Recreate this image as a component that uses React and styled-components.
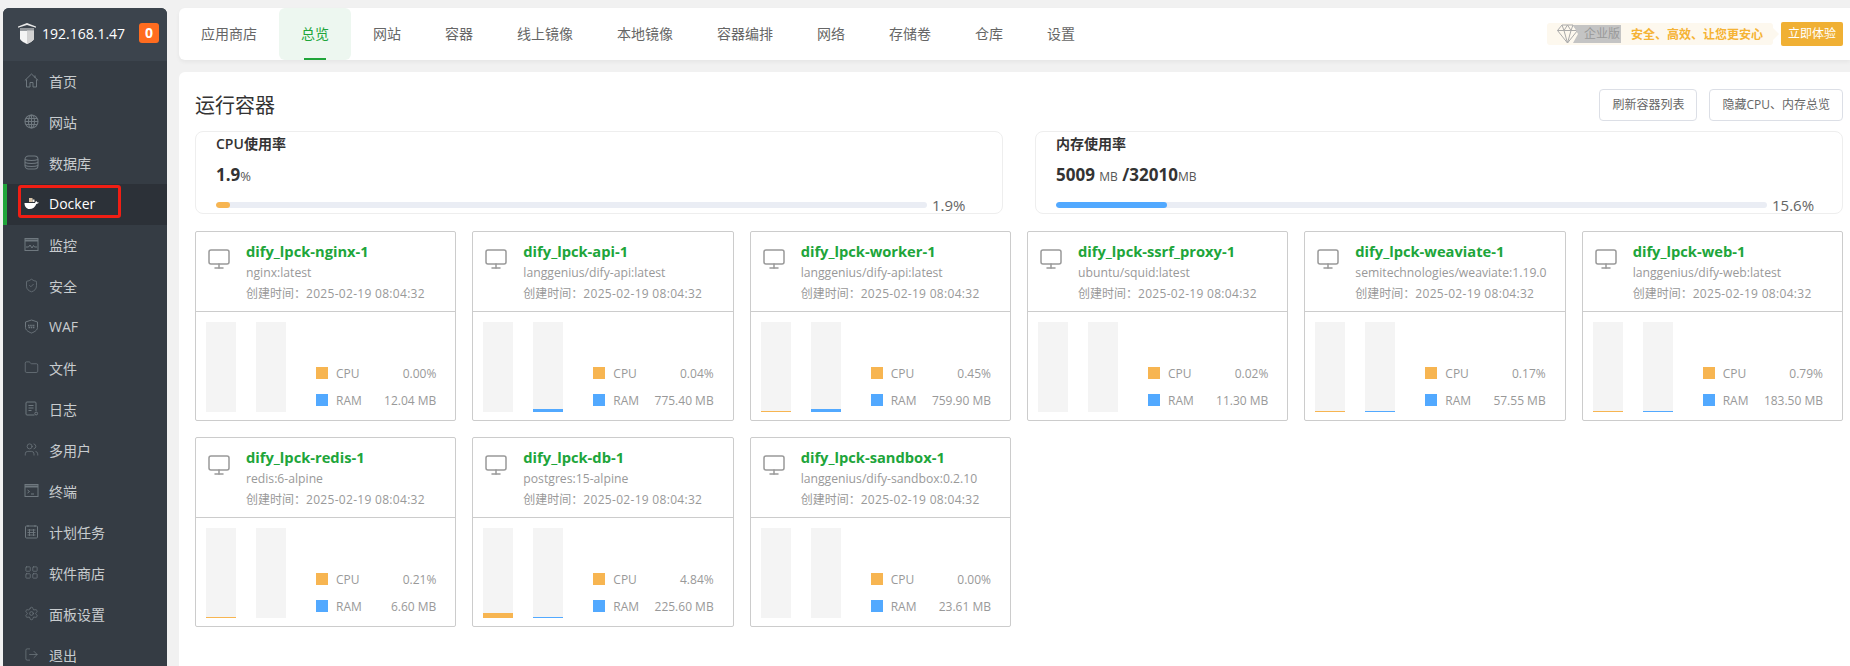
import styled, { createGlobalStyle } from "styled-components";
import { ShieldCheck, Folder, Users, LayoutGrid, Settings, LogOut, Monitor } from "lucide-react";

const GlobalStyle = createGlobalStyle`
  html, body {
    margin: 0;
    height: 666px;
    overflow: hidden;
    background: #f1f1f1;
    font-family: "Open Sans", "Noto Sans CJK SC", sans-serif;
  }
  * { box-sizing: border-box; }
`;

const Page = styled.div`
  display: flex;
  height: 666px;
  padding: 8px 0 0 3px;
  gap: 12px;
`;

const Sidebar = styled.aside`
  width: 164px;
  flex: none;
  background: #353c44;
  border-radius: 6px 6px 0 0;
  overflow: hidden;
`;

const SideHead = styled.div`
  height: 53px;
  background: #3c444d;
  display: flex;
  align-items: center;
  padding: 0 8px 3px 14px;
  color: #fff;
  font-size: 14px;
`;

const HostName = styled.span`
  margin-left: 5px;
  flex: 1;
  white-space: nowrap;
`;

const Badge = styled.span`
  width: 20px;
  height: 20px;
  background: #ff6c1f;
  border-radius: 3px;
  font-weight: 700;
  font-size: 14px;
  line-height: 20px;
  text-align: center;
`;

const SideItem = styled.div`
  position: relative;
  height: 41px;
  display: flex;
  align-items: center;
  gap: 10px;
  padding-bottom: 2px;
  font-size: 14px;
  color: ${(p) => (p.$active ? "#fff" : "#c8cccf")};
  background: ${(p) => (p.$active ? "#2c3138" : "transparent")};
  border-left: ${(p) => (p.$active ? "4px solid #20a53a" : "none")};
  padding-left: ${(p) => (p.$active ? "17px" : "21px")};
  svg {
    flex: none;
    color: ${(p) => (p.$active ? "#fff" : "#6f787f")};
  }
`;

const RedBox = styled.span`
  position: absolute;
  left: 11px;
  top: 1px;
  width: 103px;
  height: 33px;
  border: 3px solid #f01e14;
  border-radius: 3px;
`;

const Main = styled.main`
  flex: 1;
  min-width: 0;
  display: flex;
  flex-direction: column;
  gap: 12px;
`;

const TopBar = styled.nav`
  height: 52px;
  flex: none;
  background: #fff;
  border-radius: 6px 0 0 6px;
  box-shadow: 0 2px 4px rgba(0, 0, 0, 0.05);
  display: flex;
  align-items: stretch;
  padding-right: 7px;
`;

const Tab = styled.div`
  position: relative;
  padding: 0 22px;
  font-size: 14px;
  line-height: 52px;
  white-space: nowrap;
  color: ${(p) => (p.$active ? "#20a53a" : "#666")};
  background: ${(p) => (p.$active ? "#edf7f0" : "transparent")};
  border-radius: 6px;
  ${(p) =>
    p.$active &&
    `&::after {
      content: "";
      position: absolute;
      left: 25px;
      bottom: 0;
      width: 22px;
      height: 2px;
      background: #20a53a;
    }`}
`;

const Promo = styled.div`
  margin-left: auto;
  align-self: center;
  display: flex;
  align-items: center;
  gap: 8px;
`;

const PromoBanner = styled.div`
  position: relative;
  width: 226px;
  height: 22px;
  background: #fdf8ee;
  border-radius: 3px;
  display: flex;
  align-items: center;
  padding-left: 10px;
  &::after {
    content: "";
    position: absolute;
    right: -6px;
    top: 5px;
    border-left: 6px solid #fdf8ee;
    border-top: 6px solid transparent;
    border-bottom: 6px solid transparent;
  }
`;

const Edition = styled.span`
  height: 18px;
  width: 48px;
  margin-left: -5px;
  background: #c4c4c4;
  clip-path: polygon(0 0, 100% 0, 100% 100%, 0 100%, 5px 50%);
  color: #999;
  font-size: 12px;
  line-height: 18px;
  padding-left: 11px;
  white-space: nowrap;
`;

const Slogan = styled.span`
  margin-left: 10px;
  color: #f5b335;
  font-size: 12px;
  font-weight: 700;
  white-space: nowrap;
`;

const TryButton = styled.div`
  width: 62px;
  height: 24px;
  background: #f0b034;
  color: #fff;
  border-radius: 2px;
  font-size: 12px;
  line-height: 24px;
  text-align: center;
`;

const Panel = styled.section`
  flex: 1;
  background: #fff;
  border-radius: 6px 0 0 0;
  padding: 17px 7px 0 16px;
`;

const PanelHead = styled.div`
  display: flex;
  align-items: center;
  gap: 12px;
  margin-bottom: 10px;
`;

const Title = styled.h2`
  margin: 0 auto 2px 0;
  font-size: 20px;
  font-weight: 400;
  color: #333;
`;

const Button = styled.div`
  height: 32px;
  padding: 0 12px;
  border: 1px solid #dcdfe6;
  border-radius: 4px;
  font-size: 12px;
  line-height: 30px;
  color: #666;
  white-space: nowrap;
`;

const StatRow = styled.div`
  display: grid;
  grid-template-columns: 1fr 1fr;
  gap: 32px;
  margin-bottom: 17px;
`;

const StatCard = styled.div`
  height: 83px;
  border: 1px solid #eee;
  border-radius: 8px;
  padding: 1px 20px 0 20px;
`;

const StatTitle = styled.div`
  font-size: 14px;
  line-height: 22px;
  font-weight: 600;
  color: #333;
`;

const StatValue = styled.div`
  margin-top: 8px;
  height: 24px;
  font-size: 17px;
  line-height: 24px;
  font-weight: 700;
  color: #333;
`;

const Unit = styled.span`
  font-size: ${(p) => p.$size}px;
  font-weight: 400;
  color: #555;
`;

const BarLine = styled.div`
  margin-top: 11px;
  display: flex;
  align-items: center;
  height: 14px;
`;

const Track = styled.div`
  flex: 1;
  height: 6px;
  border-radius: 3px;
  background: #eaedf4;
  overflow: hidden;
`;

const Fill = styled.div`
  height: 100%;
  border-radius: 3px;
  background: ${(p) => p.$color};
  width: ${(p) => p.$pct}%;
`;

const Percent = styled.span`
  width: 55px;
  flex: none;
  padding-left: 5px;
  font-size: 15px;
  line-height: 14px;
  color: #666;
`;

const Grid = styled.div`
  display: grid;
  grid-template-columns: repeat(6, 1fr);
  gap: 16px;
`;

const Card = styled.article`
  height: 190px;
  border: 1px solid #ccc;
  border-radius: 2px;
  display: flex;
  flex-direction: column;
`;

const CardHead = styled.header`
  height: 80px;
  flex: none;
  border-bottom: 1px solid #ccc;
  display: flex;
  padding: 9px 0 0 11px;
  gap: 15px;
  svg {
    flex: none;
    margin-top: 6px;
    color: #999;
  }
`;

const Name = styled.div`
  font-size: 14.7px;
  line-height: 20px;
  margin-bottom: 1px;
  font-weight: 700;
  color: #20a53a;
  white-space: nowrap;
`;

const Sub = styled.div`
  font-size: 12.2px;
  line-height: 21px;
  color: #999;
  white-space: nowrap;
`;

const CreatedAt = styled(Sub)`
  font-size: 12px;
  span {
    letter-spacing: 0.3px;
  }
`;

const CardBody = styled.div`
  flex: 1;
  display: flex;
  padding: 10px 19px 0 10px;
`;

const Column = styled.div`
  width: 30px;
  height: 90px;
  margin-right: 20px;
  background: #f4f4f4;
  display: flex;
  align-items: flex-end;
`;

const ColumnFill = styled.div`
  width: 100%;
  height: ${(p) => p.$h}px;
  background: ${(p) => p.$color};
`;

const Legend = styled.div`
  flex: 1;
  margin-left: 10px;
  padding-top: 42px;
  display: flex;
  flex-direction: column;
  gap: 9px;
`;

const LegendRow = styled.div`
  display: flex;
  align-items: center;
  height: 18px;
  font-size: 12px;
  color: #999;
  white-space: nowrap;
  b {
    margin-left: auto;
    font-weight: 400;
  }
`;

const Swatch = styled.i`
  width: 12px;
  height: 12px;
  margin-right: 8px;
  background: ${(p) => p.$color};
`;

const Logo = () => (
  <svg width="20" height="22" viewBox="0 0 20 22">
    <path d="M1 4.500 10 1l9 3.500v1.200L10 3 1 5.700z" fill="#e8e8e8" />
    <path d="M3 6.500h14v1H3z" fill="#e8e8e8" />
    <path d="M3 8.500h14v8c0 2-4 4-7 5.500-3-1.500-7-3.500-7-5.500z" fill="#f4f4f4" />
    <path d="M10 8.500h7v8c0 2-4 4-7 5.500z" fill="#d2d2d2" />
  </svg>
);

const HomeIcon = () => (
  <svg width="15" height="15" viewBox="0 0 15 15" fill="none" stroke="currentColor">
    <path d="M.8 7.500 7.500 1l6.700 6.500M2.500 6.500V14h3.500V9.500h3V14h3.500V6.500M11 2.500v2.500" />
  </svg>
);

const GlobeIcon = () => (
  <svg width="15" height="15" viewBox="0 0 15 15" fill="none" stroke="currentColor" strokeWidth="1.1">
    <circle cx="7.500" cy="7.500" r="6.500" />
    <ellipse cx="7.500" cy="7.500" rx="3" ry="6.500" />
    <path d="M7.500 1v13M1 7.500h13M1.800 4.500h11.400M1.800 10.500h11.400" />
  </svg>
);

const DbIcon = () => (
  <svg width="15" height="15" viewBox="0 0 15 15" fill="none" stroke="currentColor" strokeWidth="1.1">
    <rect x="1" y="1" width="13" height="13" rx="3.500" />
    <path d="M1 4.500c3 1.400 10 1.400 13 0M1 7.500c3 1.400 10 1.400 13 0M1 10.500c3 1.400 10 1.400 13 0" />
  </svg>
);

const WhaleIcon = () => (
  <svg width="15" height="15" viewBox="0 0 15 15">
    <path d="M5 2h3.500v4H5z" fill="#d9c4a8" />
    <path d="M8.500 3.500H10.500V6H8.500z" fill="#f3efe6" />
    <path d="M.5 7h10.500c.3-1.300 1-2 1.500-2 .3.600.5 1 .5 1.400.6-.2 1.200-.1 1.700.2-.5 1-1.400 1.400-2.400 1.400C11.300 11 8.700 13 5.500 13 2.500 13 .5 10.500.5 7z" fill="#fff" />
  </svg>
);

const ChartIcon = () => (
  <svg width="15" height="15" viewBox="0 0 15 15" fill="none" stroke="currentColor">
    <rect x="1" y="1.500" width="13" height="12" />
    <path d="M1 3.500h13" strokeWidth="2" />
    <path d="M2 10h2.500l1.500-2 2 3 1.500-2.500 1 1.500H13" />
  </svg>
);

const WafIcon = () => (
  <svg width="15" height="15" viewBox="0 0 15 15" fill="none" stroke="currentColor">
    <path d="M7.500 1 13.500 3v5.500c0 2.500-3 4.500-6 5.500-3-1-6-3-6-5.500V3z" />
    <path d="M4 6.500h7M4.500 8.500h6" strokeWidth="1.300" strokeDasharray="1.500 .7" />
  </svg>
);

const LogIcon = () => (
  <svg width="15" height="15" viewBox="0 0 15 15" fill="none" stroke="currentColor">
    <path d="M10.500 14H3a1 1 0 0 1-1-1V2a1 1 0 0 1 1-1h8a1 1 0 0 1 1 1v8" />
    <path d="M4.500 4.500h5M4.500 7h5M4.500 9.500h3" />
    <circle cx="12.200" cy="12.500" r="1.400" />
  </svg>
);

const TerminalIcon = () => (
  <svg width="15" height="15" viewBox="0 0 15 15" fill="none" stroke="currentColor">
    <rect x="1" y="1.500" width="13" height="12" />
    <path d="M1 3.500h13" strokeWidth="2" />
    <path d="M3.500 7 5.500 8.500l-2 1.500M7 11h3" />
  </svg>
);

const CalendarIcon = () => (
  <svg width="15" height="15" viewBox="0 0 15 15" fill="none" stroke="currentColor">
    <rect x="1.500" y="2" width="12" height="12" rx="1" />
    <path d="M4 1v2M11 1v2M3.500 6h8M3.500 8.500h8M3.500 11h8M5.500 5v7M9.500 5v7" strokeWidth=".9" />
  </svg>
);

const Diamond = () => (
  <svg width="21" height="20" viewBox="0 0 21 20" fill="none" stroke="#aaa">
    <path d="M5 1h11l4.500 5.500L10.500 19 .5 6.500z" />
    <path d="M.5 6.500h20M7 6.500 10.500 19 14 6.500M5 1l2 5.500L10.500 1 14 6.500 16 1" />
  </svg>
);

const iconProps = { size: 15, strokeWidth: 1.2 };

const menu = [
  { label: "首页", icon: <HomeIcon /> },
  { label: "网站", icon: <GlobeIcon /> },
  { label: "数据库", icon: <DbIcon /> },
  { label: "Docker", icon: <WhaleIcon />, active: true },
  { label: "监控", icon: <ChartIcon /> },
  { label: "安全", icon: <ShieldCheck {...iconProps} /> },
  { label: "WAF", icon: <WafIcon /> },
  { label: "文件", icon: <Folder {...iconProps} /> },
  { label: "日志", icon: <LogIcon /> },
  { label: "多用户", icon: <Users {...iconProps} /> },
  { label: "终端", icon: <TerminalIcon /> },
  { label: "计划任务", icon: <CalendarIcon /> },
  { label: "软件商店", icon: <LayoutGrid {...iconProps} /> },
  { label: "面板设置", icon: <Settings {...iconProps} /> },
  { label: "退出", icon: <LogOut {...iconProps} /> },
];

const tabs = ["应用商店", "总览", "网站", "容器", "线上镜像", "本地镜像", "容器编排", "网络", "存储卷", "仓库", "设置"];

const containers = [
  { name: "dify_lpck-nginx-1", image: "nginx:latest", cpu: "0.00%", ram: "12.04 MB", cpuH: 0, ramH: 0 },
  { name: "dify_lpck-api-1", image: "langgenius/dify-api:latest", cpu: "0.04%", ram: "775.40 MB", cpuH: 0, ramH: 3 },
  { name: "dify_lpck-worker-1", image: "langgenius/dify-api:latest", cpu: "0.45%", ram: "759.90 MB", cpuH: 1, ramH: 3 },
  { name: "dify_lpck-ssrf_proxy-1", image: "ubuntu/squid:latest", cpu: "0.02%", ram: "11.30 MB", cpuH: 0, ramH: 0 },
  { name: "dify_lpck-weaviate-1", image: "semitechnologies/weaviate:1.19.0", cpu: "0.17%", ram: "57.55 MB", cpuH: 1, ramH: 1 },
  { name: "dify_lpck-web-1", image: "langgenius/dify-web:latest", cpu: "0.79%", ram: "183.50 MB", cpuH: 1, ramH: 1 },
  { name: "dify_lpck-redis-1", image: "redis:6-alpine", cpu: "0.21%", ram: "6.60 MB", cpuH: 1, ramH: 0 },
  { name: "dify_lpck-db-1", image: "postgres:15-alpine", cpu: "4.84%", ram: "225.60 MB", cpuH: 5, ramH: 1 },
  { name: "dify_lpck-sandbox-1", image: "langgenius/dify-sandbox:0.2.10", cpu: "0.00%", ram: "23.61 MB", cpuH: 0, ramH: 0 },
];

const CPU_COLOR = "#f7b551";
const RAM_COLOR = "#52a9ff";

function ContainerCard({ item }) {
  return (
    <Card>
      <CardHead>
        <Monitor size={24} strokeWidth={1.5} />
        <div>
          <Name>{item.name}</Name>
          <Sub>{item.image}</Sub>
          <CreatedAt>
            创建时间：<span>2025-02-19 08:04:32</span>
          </CreatedAt>
        </div>
      </CardHead>
      <CardBody>
        <Column>
          <ColumnFill $h={item.cpuH} $color={CPU_COLOR} />
        </Column>
        <Column>
          <ColumnFill $h={item.ramH} $color={RAM_COLOR} />
        </Column>
        <Legend>
          <LegendRow>
            <Swatch $color={CPU_COLOR} />
            CPU
            <b>{item.cpu}</b>
          </LegendRow>
          <LegendRow>
            <Swatch $color={RAM_COLOR} />
            RAM
            <b>{item.ram}</b>
          </LegendRow>
        </Legend>
      </CardBody>
    </Card>
  );
}

export default function App() {
  return (
    <>
      <GlobalStyle />
      <Page>
        <Sidebar>
          <SideHead>
            <Logo />
            <HostName>192.168.1.47</HostName>
            <Badge>0</Badge>
          </SideHead>
          {menu.map((m) => (
            <SideItem key={m.label} $active={m.active}>
              {m.icon}
              {m.label}
              {m.active && <RedBox />}
            </SideItem>
          ))}
        </Sidebar>
        <Main>
          <TopBar>
            {tabs.map((t) => (
              <Tab key={t} $active={t === "总览"}>
                {t}
              </Tab>
            ))}
            <Promo>
              <PromoBanner>
                <Diamond />
                <Edition>企业版</Edition>
                <Slogan>安全、高效、让您更安心</Slogan>
              </PromoBanner>
              <TryButton>立即体验</TryButton>
            </Promo>
          </TopBar>
          <Panel>
            <PanelHead>
              <Title>运行容器</Title>
              <Button>刷新容器列表</Button>
              <Button>隐藏CPU、内存总览</Button>
            </PanelHead>
            <StatRow>
              <StatCard>
                <StatTitle>CPU使用率</StatTitle>
                <StatValue>
                  1.9<Unit $size={13}>%</Unit>
                </StatValue>
                <BarLine>
                  <Track>
                    <Fill $pct={1.9} $color={CPU_COLOR} />
                  </Track>
                  <Percent>1.9%</Percent>
                </BarLine>
              </StatCard>
              <StatCard>
                <StatTitle>内存使用率</StatTitle>
                <StatValue>
                  5009 <Unit $size={12}>MB</Unit> /32010<Unit $size={12}>MB</Unit>
                </StatValue>
                <BarLine>
                  <Track>
                    <Fill $pct={15.6} $color={RAM_COLOR} />
                  </Track>
                  <Percent>15.6%</Percent>
                </BarLine>
              </StatCard>
            </StatRow>
            <Grid>
              {containers.map((c) => (
                <ContainerCard key={c.name} item={c} />
              ))}
            </Grid>
          </Panel>
        </Main>
      </Page>
    </>
  );
}
